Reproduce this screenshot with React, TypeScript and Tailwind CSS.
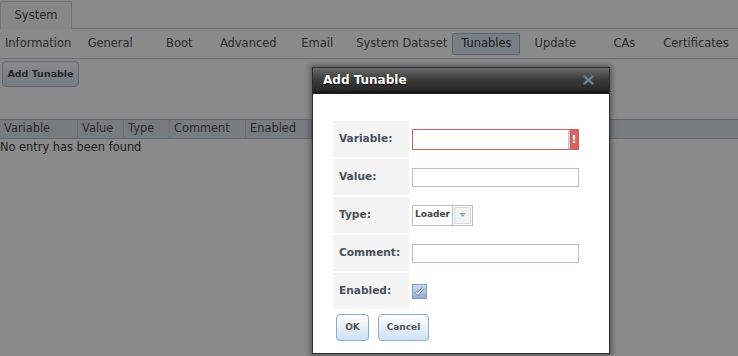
import React from "react";

const tabs = ["Information", "General", "Boot", "Advanced", "Email", "System Dataset", "Tunables", "Update", "CAs", "Certificates"];
const cols = [
  { name: "Variable", w: "w-[78px]" },
  { name: "Value", w: "w-[46px]" },
  { name: "Type", w: "w-[46px]" },
  { name: "Comment", w: "w-[76px]" },
  { name: "Enabled", w: "w-[66px]" },
];

function Label({ children }: { children: React.ReactNode }) {
  return (
    <div className="h-[36px] bg-[#f4f4f4] flex items-center pl-[6px] text-[10.6px] font-bold text-[#48505b]">
      {children}
    </div>
  );
}

export default function App() {
  return (
    <div className="relative w-[738px] h-[356px] overflow-hidden bg-white font-['DejaVu_Sans',sans-serif]">
      {/* underlying page */}
      <div className="flex h-[29px]">
        <div className="mt-[1px] w-[72px] h-[28px] border border-b-0 border-[#d4d4d4] bg-[#fafafa] flex items-center justify-center text-[11.5px] text-[#444] rounded-tl-[3px]">
          System
        </div>
        <div className="flex-1 border-b border-[#c6c6c6]" />
      </div>
      <div className="h-[30px] flex items-center gap-[1px] pl-[1px] border-b border-[#c6c6c6]">
        {tabs.map((t) => (
          <div
            key={t}
            className={
              t === "Tunables"
                ? "min-w-[68px] h-[22px] px-[3px] border border-[#9fb9d8] bg-[#dde9f5] rounded-[2px] flex items-center justify-center text-[11.45px] text-[#333]"
                : "min-w-[68px] h-[22px] px-[3px] border border-transparent flex items-center justify-center text-[11.45px] text-[#505050]"
            }
          >
            {t}
          </div>
        ))}
      </div>
      <div className="pt-[2px] pl-[2px]">
        <div className="w-[77px] h-[26px] rounded-[4px] border border-[#a9c0da] bg-gradient-to-b from-[#ffffff] to-[#d5e3f2] flex items-center justify-center text-[9.5px] font-bold text-[#4a4a4a]">
          Add Tunable
        </div>
      </div>
      <div className="mt-[32px]">
        <div className="h-[20px] flex border-y border-[#bcbcbc] bg-[#dde6ef]">
          {cols.map((c) => (
            <div
              key={c.name}
              className={`${c.w} h-full flex items-center pl-[4px] text-[11.4px] text-[#505050] border-r border-[#c8ced6]`}
            >
              {c.name}
            </div>
          ))}
        </div>
        <div className="text-[11.4px] text-[#3a3a3a] leading-[15px] pt-[1px]">No entry has been found</div>
      </div>

      {/* overlay */}
      <div className="absolute inset-0 bg-black/[0.46]" />

      {/* dialog */}
      <div className="absolute left-[312px] top-[67px] w-[298px] h-[287px] border border-[#2c2c2c] bg-white shadow-[0_0_5px_2px_rgba(0,0,0,0.35)] flex flex-col">
        <div className="h-[26px] shrink-0 bg-gradient-to-b from-[#6b6b6b] via-[#3c3c3c] to-[#262626] border-b-[3px] border-[#1c1c1c] flex items-center justify-between pl-[10px] pr-[15px]">
          <span className="text-[12px] font-bold text-white [text-shadow:0_1px_1px_#000]">Add Tunable</span>
          <svg width="11" height="10" viewBox="0 0 11 10">
            <path d="M1.5 1.5 L9.5 8.5 M9.5 1.5 L1.5 8.5" stroke="#55657a" strokeWidth="2.8" strokeLinecap="square" />
            <path d="M1.5 1.5 L9.5 8.5 M9.5 1.5 L1.5 8.5" stroke="#7d8ca0" strokeWidth="1.2" />
          </svg>
        </div>
        <div className="pt-[27px] pl-[20px]">
          <div className="grid grid-cols-[76px_1fr] gap-x-[3px] gap-y-[2px]">
            <Label>Variable:</Label>
            <div className="flex items-center">
              <div className="relative w-[167px] h-[21px] border border-[#d95c5c] bg-white">
                <div className="absolute right-0 top-0 bottom-0 w-[10px] bg-[#d86262] border-l-[2px] border-[#c9c9c9] flex items-center justify-center text-[11px] font-bold text-white leading-none">
                  !
                </div>
              </div>
            </div>
            <Label>Value:</Label>
            <div className="flex items-center">
              <div className="w-[167px] h-[19px] border border-[#b7bdcb] bg-white" />
            </div>
            <Label>Type:</Label>
            <div className="flex items-center">
              <div className="w-[61px] h-[21px] border border-[#b7bdcb] bg-white flex">
                <div className="flex-1 flex items-center pl-[2px] text-[9px] font-bold text-[#444]">Loader</div>
                <div className="w-[20px] h-full border-l border-[#b7bdcb] p-[1px]">
                  <div className="w-full h-full border border-[#d7dbe2] bg-[#f3f3f3] flex items-center justify-center">
                    <svg width="7" height="4" viewBox="0 0 7 4">
                      <path d="M0 0 L7 0 L3.5 4 Z" fill="#95a9c8" />
                    </svg>
                  </div>
                </div>
              </div>
            </div>
            <Label>Comment:</Label>
            <div className="flex items-center">
              <div className="w-[167px] h-[19px] border border-[#b7bdcb] bg-white" />
            </div>
            <Label>Enabled:</Label>
            <div className="flex items-center">
              <div className="w-[15px] h-[15px] border border-[#7f9aba] bg-gradient-to-b from-[#c9dcf1] to-[#8fb0da] flex items-center justify-center">
                <svg width="11" height="10" viewBox="0 0 11 10">
                  <path d="M1.5 5.5 L4 8 L9.5 1.5" fill="none" stroke="#4f75a6" strokeWidth="2.8" />
                  <path d="M1.5 5.5 L4 8 L9.5 1.5" fill="none" stroke="#ffffff" strokeWidth="1.4" />
                </svg>
              </div>
            </div>
          </div>
          <div className="flex gap-[9px] mt-[5px] ml-[3px]">
            <div className="w-[33px] h-[27px] rounded-[4px] border border-[#8fabcc] bg-gradient-to-b from-[#ffffff] to-[#cfe1f4] flex items-center justify-center text-[9px] font-bold text-[#555]">
              OK
            </div>
            <div className="w-[51px] h-[27px] rounded-[4px] border border-[#8fabcc] bg-gradient-to-b from-[#ffffff] to-[#cfe1f4] flex items-center justify-center text-[9px] font-bold text-[#555]">
              Cancel
            </div>
          </div>
        </div>
      </div>
    </div>
  );
}
